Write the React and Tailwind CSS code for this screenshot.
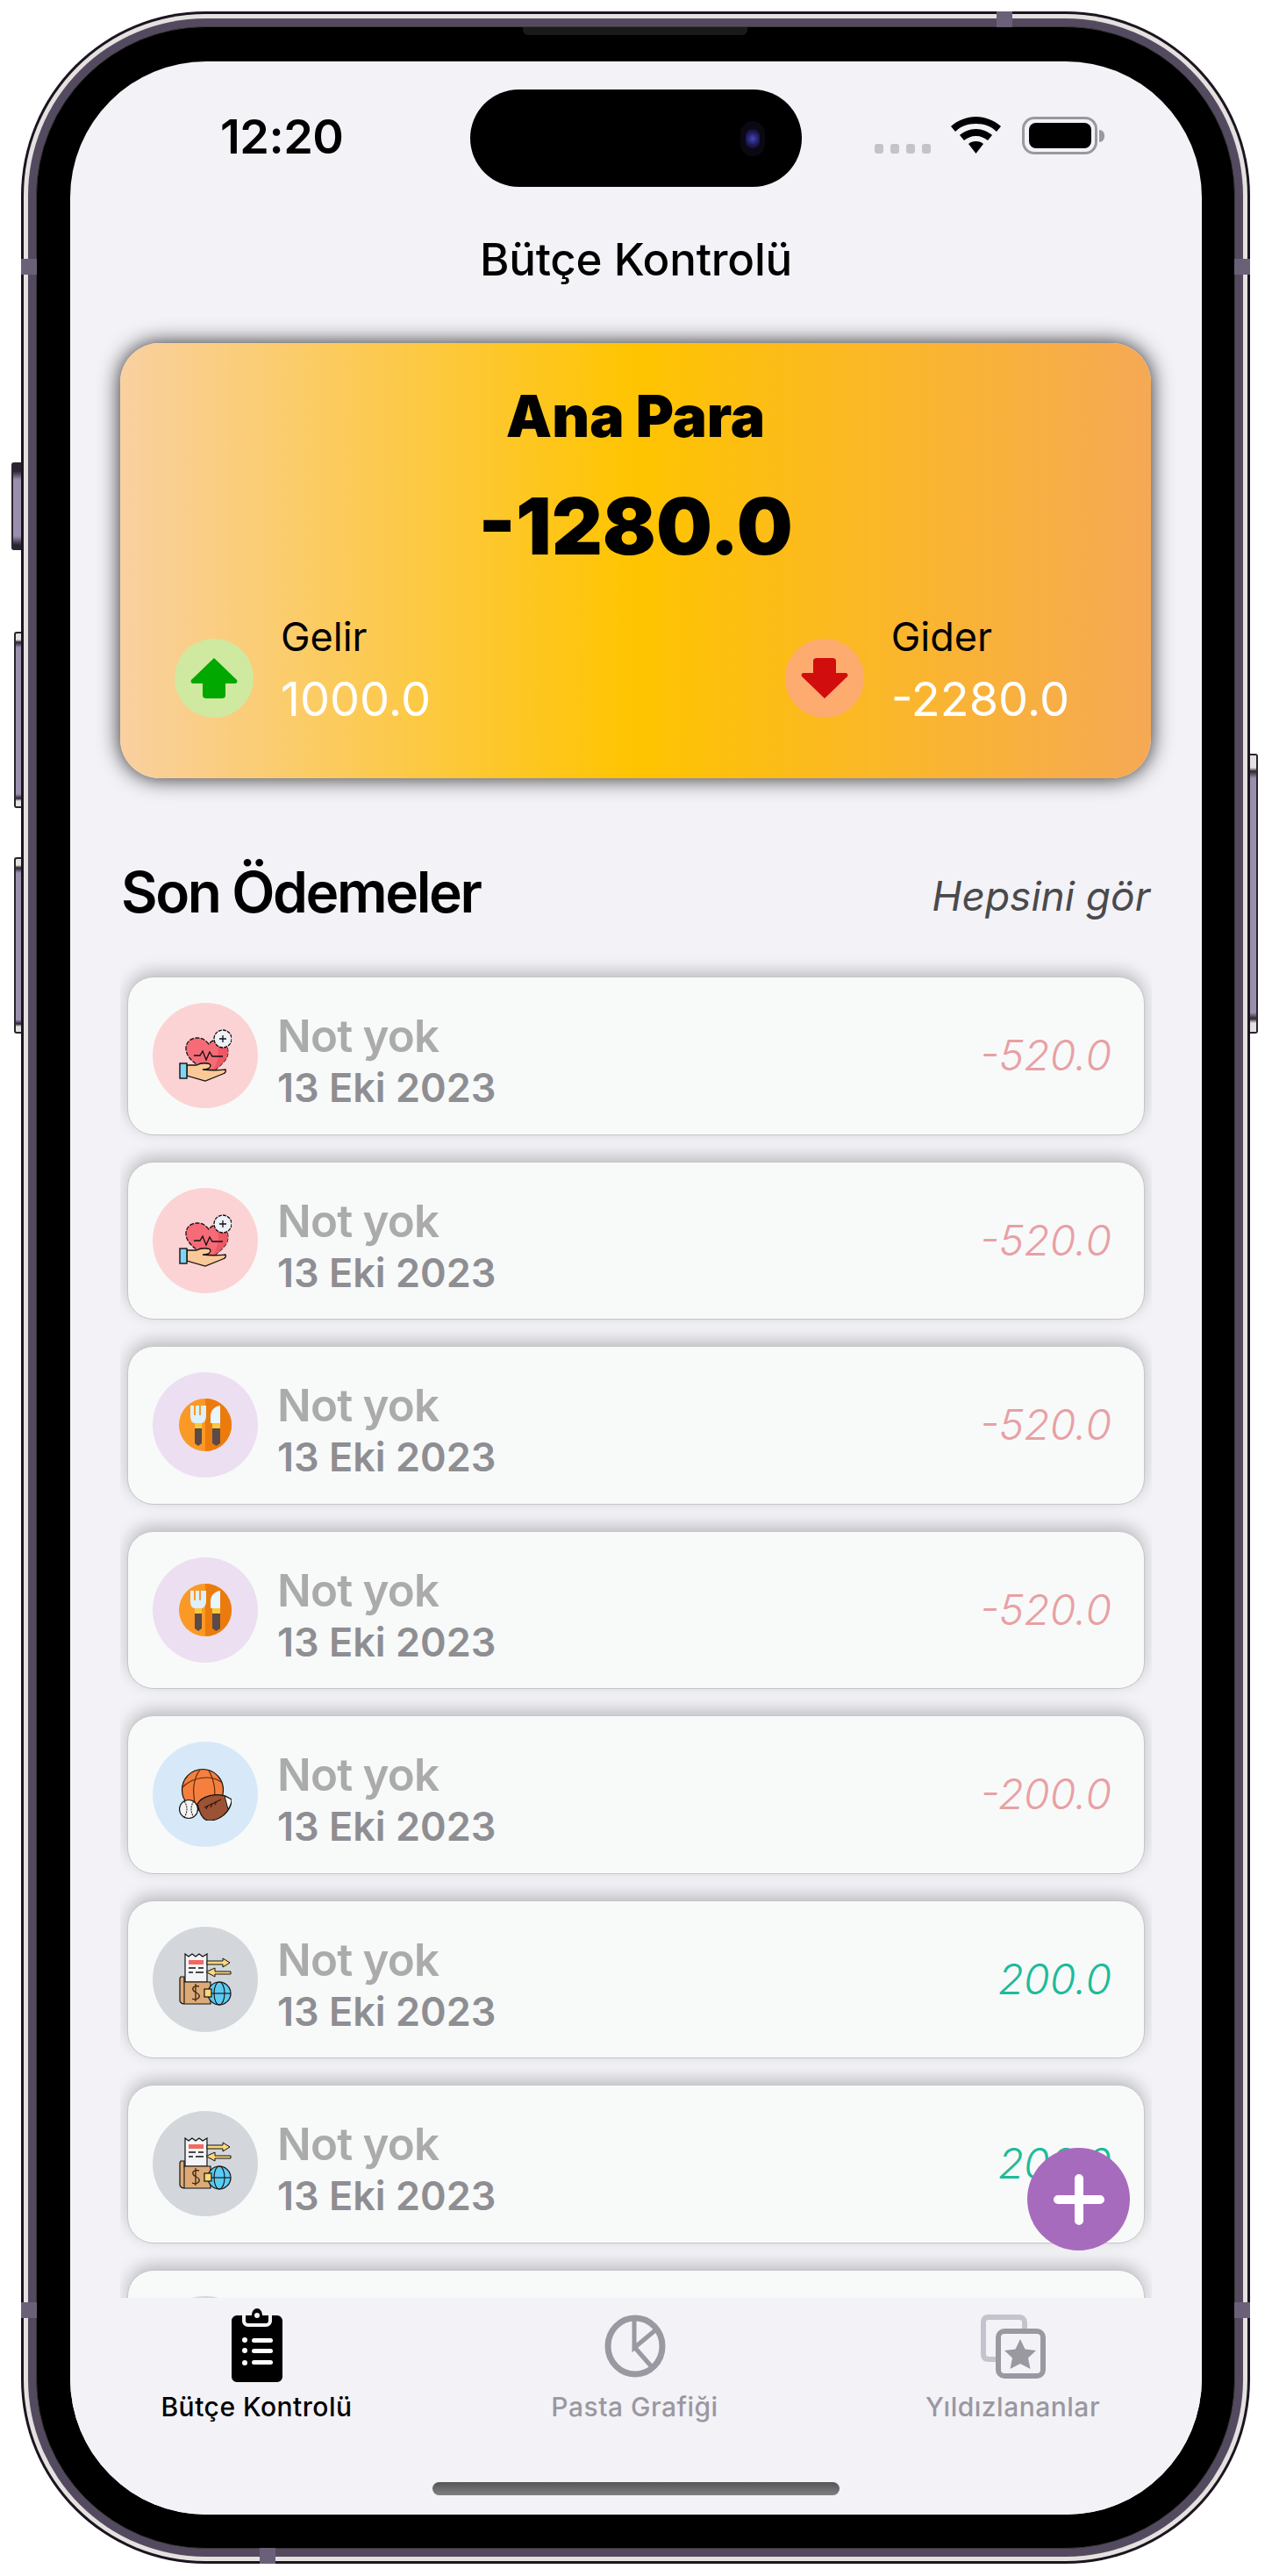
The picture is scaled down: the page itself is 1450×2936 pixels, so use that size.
import React from 'react';

const font = { fontFamily: 'Inter, "Noto Sans", sans-serif' };

const HeartIcon = () => (
    <svg width="60" height="60" viewBox="0 0 60 60">
        <path d="M36 50C22 42 8 34 8 22C8 14 14 10 21 10C27 10 31 13 34 17C38 12 44 11 49 12C57 18 58 30 52 36C47 42 42 46 36 50Z" fill="#F56B77" stroke="#111" strokeWidth="1.3" strokeDasharray="5 1.5" />
        <path d="M40 12C46 20 48 36 36 50C42 46 47 42 52 36C58 30 57 18 49 12Z" fill="#EE5763" />
        <path d="M17 30H24L27 25L31 35L35 26L38 31H50" fill="none" stroke="#111" strokeWidth="1.3" />
        <circle cx="50" cy="11" r="10" fill="#EEF1F7" stroke="#111" strokeWidth="1.3" strokeDasharray="4 1.2" />
        <path d="M50 7V15M46 11H54" stroke="#111" strokeWidth="1.3" />
        <path d="M9 41H20C25 38 35 38 36 41C36 45 31 46 27 46C35 47 44 47 53 46C54 48 53 50 50 51L30 59L9 53Z" fill="#FBC897" stroke="#111" strokeWidth="1.3" />
        <rect x="1" y="39" width="8" height="17" fill="#7FD6F4" stroke="#111" strokeWidth="1.4" />
    </svg>
);

const FoodIcon = () => (
    <svg width="60" height="60" viewBox="0 0 60 60">
        <circle cx="30" cy="30" r="30" fill="#FA9925" />
        <path d="M30 0A30 30 0 0 1 30 60Z" fill="#EC7B0D" />
        <path d="M13 8H17V19H19V8H23V19H25V8H31V20C31 25 28 28 26 28H18C15 28 13 25 13 20Z" fill="#DDF0FF" />
        <rect x="18" y="28" width="8" height="6" fill="#F8C93E" />
        <path d="M18 34H26V51L22 54L18 51Z" fill="#5A4A48" />
        <path d="M47 8V28H36V20C36 14 40 9 47 8Z" fill="#E8F6FF" />
        <rect x="38" y="28" width="9" height="6" fill="#F8C93E" />
        <path d="M38 34H47V51L42.500 54L38 51Z" fill="#5A4A48" />
    </svg>
);

const BallsIcon = () => (
    <svg width="60" height="60" viewBox="0 0 60 60">
        <circle cx="27" cy="25" r="23.5" fill="#F5803E" stroke="#111" strokeWidth="1.2" />
        <path d="M4 22C15 11 35 7 48 16M24 2C15 14 15 32 20 46M34 3C40 13 42 25 40 38" fill="none" stroke="#5d2a10" strokeWidth="1.2" />
        <path d="M21 41C27 31 42 29 53 32L60 36C60 46 50 60 34 60C29 60 24 54 21 41Z" fill="#9C5234" stroke="#111" strokeWidth="1.2" />
        <path d="M29 45L48 36M33 43L31 47M38 41L36 45M43 38L41 42" fill="none" stroke="#2f1408" strokeWidth="1.1" />
        <path d="M52 32L60 36C60 40 58 44 56 47Z" fill="#fff" stroke="#111" strokeWidth="1" />
        <circle cx="11" cy="47" r="10.500" fill="#F4F4F4" stroke="#111" strokeWidth="1.2" />
        <path d="M6 38C10 43 10 51 6 56M17 38C13 43 13 51 17 56" fill="none" stroke="#222" strokeWidth="1.1" strokeDasharray="2 1" />
    </svg>
);

const WalletIcon = () => (
    <svg width="60" height="60" viewBox="0 0 60 60">
        <path d="M7 1L11 4L15 1L19 4L23 1L27 4L32 1V33H7Z" fill="#F2F4F8" stroke="#111" strokeWidth="1.2" />
        <rect x="11" y="8" width="17" height="5" fill="#F2695F" />
        <path d="M11 17H19M22 17H28M11 22H16M19 22H28" stroke="#111" strokeWidth="1.3" />
        <path d="M32 9H50V6L58 11L50 16V13H32Z" fill="#F9D77A" stroke="#111" strokeWidth="1" />
        <path d="M59 21H41V17L31 21.500L41 27V24H59Z" fill="#F9D77A" stroke="#111" strokeWidth="1" />
        <path d="M2 27H6V33H36V58H6C3 58 1 56 1 54V29Z" fill="#DDAA76" stroke="#111" strokeWidth="1.2" />
        <path d="M6 33V58" stroke="#111" strokeWidth="1.1" />
        <circle cx="46" cy="46" r="13" fill="#5CCBF2" stroke="#111" strokeWidth="1.2" />
        <ellipse cx="46" cy="46" rx="6" ry="13" fill="none" stroke="#111" strokeWidth="1.1" />
        <path d="M33 46H59" stroke="#111" strokeWidth="1.1" />
        <rect x="29" y="41" width="8" height="9" fill="#F9D77A" stroke="#111" strokeWidth="1.2" />
        <path d="M23 38C18 37 15 39 16 42C17 45 22 45 23 48C24 52 19 54 15 52M19 35V55" fill="none" stroke="#3a2412" strokeWidth="1.3" />
    </svg>
);

const rows = [
    { id: 1, bg: 'bg-[#FCD3D4]', Icon: HeartIcon, amount: '-520.0' },
    { id: 2, bg: 'bg-[#FCD3D4]', Icon: HeartIcon, amount: '-520.0' },
    { id: 3, bg: 'bg-[#ECDFF1]', Icon: FoodIcon, amount: '-520.0' },
    { id: 4, bg: 'bg-[#ECDFF1]', Icon: FoodIcon, amount: '-520.0' },
    { id: 5, bg: 'bg-[#D7E9F8]', Icon: BallsIcon, amount: '-200.0' },
    { id: 6, bg: 'bg-[#D3D6DB]', Icon: WalletIcon, amount: '200.0', income: true },
    { id: 7, bg: 'bg-[#D3D6DB]', Icon: WalletIcon, amount: '200.0', income: true },
];

const StatusBar = () => (
    <div className="flex h-[143px] shrink-0 pt-[32px]">
        <div className="w-[456px] pl-[171px] pt-[27px] text-[54px] leading-[54px] font-semibold text-black tracking-[-0.5px]">12:20</div>
        <div className="relative flex h-[111px] w-[378px] items-center justify-end rounded-[56px] bg-black pr-[42px]">
            <div className="flex h-[40px] w-[28px] items-center justify-center rounded-full bg-[#0b0812]">
                <div className="h-[22px] w-[16px] rounded-full bg-[radial-gradient(circle,#4a45b8_0%,#1c1a56_55%,#0c0b20_100%)]" />
            </div>
        </div>
        <div className="flex flex-1 items-start pl-[83px] pt-[31px]">
            <div className="mt-[31px] flex gap-[8px]">
                <div className="h-[11px] w-[10px] rounded-[3px] bg-[#C4C3C9]" />
                <div className="h-[11px] w-[10px] rounded-[3px] bg-[#C4C3C9]" />
                <div className="h-[11px] w-[10px] rounded-[3px] bg-[#C4C3C9]" />
                <div className="h-[11px] w-[10px] rounded-[3px] bg-[#C4C3C9]" />
            </div>
            <svg className="ml-[23px]" width="57" height="42" viewBox="0 0 57 42">
                <path d="M28.500 0C18 0 8 4 0 11L5 17C11 11 19 8 28.500 8C38 8 46 11 52 17L57 11C49 4 39 0 28.500 0Z" fill="#000" />
                <path d="M28.500 14C21 14 15 17 10 21L15 27C19 24 23 22 28.500 22C34 22 38 24 42 27L47 21C42 17 36 14 28.500 14Z" fill="#000" />
                <path d="M28.500 28C25 28 22 29 20 31L28.500 42L37 31C35 29 32 28 28.500 28Z" fill="#000" />
            </svg>
            <div className="ml-[24px] flex h-[43px] w-[86px] items-center justify-center rounded-[14px] border-[3.500px] border-[#99999E]">
                <div className="h-[29px] w-[71px] rounded-[8px] bg-black" />
            </div>
            <div className="ml-[2px] mt-[15px] h-[14px] w-[6px] rounded-r-full bg-[#99999E]" />
        </div>
    </div>
);

const Summary = ({ label, value, right }) => (
    <div className="flex">
        <div className={`mt-[22px] flex h-[90px] w-[90px] items-center justify-center rounded-full ${right ? 'bg-[#FDAB6F]' : 'bg-[#CFE9A0]'}`}>
            {right ? (
                <svg width="54" height="46" viewBox="0 0 54 46">
                    <path d="M27 46L53 21C54 19 53 17 51 17H40V3C40 1 38 0 36 0H18C16 0 14 1 14 3V17H3C1 17 0 19 1 21Z" fill="#D10D0D" />
                </svg>
            ) : (
                <svg width="54" height="46" viewBox="0 0 54 46">
                    <path d="M27 0L53 25C54 27 53 29 51 29H40V43C40 45 38 46 36 46H18C16 46 14 45 14 43V29H3C1 29 0 27 1 25Z" fill="#00A800" />
                </svg>
            )}
        </div>
        <div className="ml-[31px]">
            <div className="text-[45px] leading-[50px] text-black -mt-[5px]">{label}</div>
            <div className="mt-[16px] text-[54px] leading-[60px] text-white">{value}</div>
        </div>
    </div>
);

const Row = ({ bg, Icon, amount, income }) => (
    <div className="flex h-[180.500px] shrink-0 items-center rounded-[30px] border border-[#C4C6C6] bg-[#F8FAF9] pl-[28px] pr-[37px] shadow-[0_-6px_18px_rgba(0,0,0,0.22)]">
        <div className={`flex h-[120px] w-[120px] shrink-0 items-center justify-center rounded-full ${bg}`}>
            <Icon />
        </div>
        <div className="ml-[22px] flex-1 pt-[10px]">
            <div className="text-[51px] leading-[64px] font-semibold tracking-[-0.8px] text-[#ABABAB]">Not yok</div>
            <div className="text-[45px] leading-[54px] font-semibold text-[#8E8E93]">13 Eki 2023</div>
        </div>
        <div className={`text-[48px] font-light italic ${income ? 'text-[#1DBB9A]' : 'text-[#E8A0A5]'}`}>{amount}</div>
    </div>
);

const Tab = ({ label, active, children }) => (
    <div className="flex flex-col items-center">
        <div className="flex h-[96px] items-end">{children}</div>
        <div className={`mt-[8px] text-[30px] leading-[40px] font-medium tracking-[0.5px] ${active ? 'text-black' : 'text-[#9A98A0]'}`}>{label}</div>
    </div>
);

const App = () => {
    return (
        <div className="relative h-[2936px] w-[1450px] bg-white pl-[24px] pt-[13px]" style={font}>
            {/* side buttons */}
            <div className="absolute left-[13px] top-[527px] h-[100px] w-[11px] rounded-l-[3px] border-2 border-r-0 border-[#2b2430] bg-[linear-gradient(180deg,#2b2430_0,#2b2430_8px,#9a90ae_18px,#9a90ae_82px,#2b2430_92px,#2b2430_100%)]" />
            <div className="absolute left-[16px] top-[720px] h-[201px] w-[8px] rounded-l-[3px] border-2 border-r-0 border-[#2b2430] bg-[linear-gradient(180deg,#E4E1DF_0,#E4E1DF_7px,#2b2430_10px,#9a90ae_16px,#9a90ae_183px,#2b2430_188px,#E4E1DF_191px,#E4E1DF_100%)]" />
            <div className="absolute left-[16px] top-[977px] h-[201px] w-[8px] rounded-l-[3px] border-2 border-r-0 border-[#2b2430] bg-[linear-gradient(180deg,#E4E1DF_0,#E4E1DF_7px,#2b2430_10px,#9a90ae_16px,#9a90ae_183px,#2b2430_188px,#E4E1DF_191px,#E4E1DF_100%)]" />
            <div className="absolute left-[1425px] top-[859px] h-[319px] w-[9px] rounded-r-[3px] border-2 border-l-0 border-[#2b2430] bg-[linear-gradient(180deg,#E4E1DF_0,#E4E1DF_14px,#2b2430_18px,#9a90ae_26px,#9a90ae_293px,#2b2430_300px,#E4E1DF_305px,#E4E1DF_100%)]" />

            <div className="h-[2909px] w-[1401px] rounded-[210px] bg-[#1c1420] p-[3px]">
                <div className="h-full w-full rounded-[207px] bg-[#E4E1DF] p-[5px]">
                    <div className="h-full w-full rounded-[202px] bg-[#544A60] p-[9px]">
                        <div className="h-full w-full rounded-[193px] border border-[#3a3a3a] bg-black pb-[38px] pl-[38px] pr-[37px] pt-[39px]">
                            <div className="flex h-[2796px] w-[1290px] flex-col overflow-hidden rounded-[155px] bg-[#F3F2F7]">
                                <StatusBar />

                                <div className="relative flex min-h-0 flex-1 flex-col">
                                    <div className="mt-[53px] text-center text-[51px] leading-[60px] font-medium tracking-[-0.2px] text-black">Bütçe Kontrolü</div>

                                    <div className="ml-[57px] mr-[58px] mt-[65px] h-[496px] shrink-0 rounded-[45px] bg-[linear-gradient(90deg,#F9D0A0_0%,#FFC400_50%,#F6A955_100%)] pt-[48px] shadow-[0_0_24px_rgba(0,0,0,0.85)]">
                                        <div className="text-center text-[66px] leading-[70px] font-black text-black">Ana Para</div>
                                        <div className="mt-[37px] text-center text-[90px] leading-[108px] font-black text-black">-1280.0</div>
                                        <div className="mt-[52px] flex justify-between pl-[62px] pr-[93px]">
                                            <Summary label="Gelir" value="1000.0" />
                                            <Summary label="Gider" value="-2280.0" right />
                                        </div>
                                    </div>

                                    <div className="ml-[58px] mr-[59px] mt-[92px] flex items-end justify-between">
                                        <div className="text-[64px] leading-[76px] font-semibold tracking-[-2.4px] text-black">Son Ödemeler</div>
                                        <div className="pb-[4px] text-[46px] leading-[60px] italic text-[#4A4A4C]">Hepsini gör</div>
                                    </div>

                                    <div className="mx-[57px] mt-[28px] flex min-h-0 flex-1 flex-col gap-[30px] overflow-hidden px-[8px] pt-[30px]">
                                        {rows.map((r) => (
                                            <Row key={r.id} bg={r.bg} Icon={r.Icon} amount={r.amount} income={r.income} />
                                        ))}
                                        {/* next row just peeking out above the tab bar */}
                                        <div className="h-[180.500px] shrink-0 rounded-[30px] border border-[#C4C6C6] bg-[#F8FAF9] pl-[28px] pt-[29px] shadow-[0_-6px_18px_rgba(0,0,0,0.22)]">
                                            <div className="h-[120px] w-[120px] rounded-full bg-[#D3D6DB]" />
                                        </div>
                                    </div>

                                    {/* floating add button */}
                                    <div className="absolute bottom-[301px] right-[82px] flex h-[117px] w-[117px] items-center justify-center rounded-full bg-[#A76BBD]">
                                        <svg width="58" height="58" viewBox="0 0 58 58">
                                            <path d="M29 5V53M5 29H53" stroke="#fff" strokeWidth="10" strokeLinecap="round" />
                                        </svg>
                                    </div>

                                    <div className="-ml-[3px] grid h-[247px] shrink-0 grid-cols-3 bg-[#F3F2F7]">
                                        <Tab label="Bütçe Kontrolü" active>
                                            <svg width="58" height="84" viewBox="0 0 58 84">
                                                <path d="M6 8H12V14C12 18 15 21 19 21H39C43 21 46 18 46 14V8H52C55 8 58 11 58 14V78C58 81 55 84 52 84H6C3 84 0 81 0 78V14C0 11 3 8 6 8Z" fill="#000" />
                                                <path d="M16 8H23C23 3 26 0 29 0C32 0 35 3 35 8H42V14C42 16 41 17 39 17H19C17 17 16 16 16 14ZM29 5A3 3 0 1 0 29 11A3 3 0 1 0 29 5Z" fill="#000" fillRule="evenodd" />
                                                <g fill="#fff">
                                                    <circle cx="15" cy="36" r="3" />
                                                    <circle cx="15" cy="48" r="3" />
                                                    <circle cx="15" cy="62" r="3" />
                                                    <rect x="23" y="34" width="24" height="5" rx="2.500" />
                                                    <rect x="23" y="46" width="24" height="5" rx="2.500" />
                                                    <rect x="23" y="59" width="24" height="5" rx="2.500" />
                                                </g>
                                            </svg>
                                        </Tab>
                                        <Tab label="Pasta Grafiği">
                                            <svg className="mb-[5px]" width="70" height="72" viewBox="0 0 70 72">
                                                <ellipse cx="35" cy="36" rx="31" ry="32" fill="none" stroke="#9A98A0" strokeWidth="7" />
                                                <path d="M34 4V38L59 17M35 38L56 62" fill="none" stroke="#9A98A0" strokeWidth="5" />
                                            </svg>
                                        </Tab>
                                        <Tab label="Yıldızlananlar">
                                            <svg className="mb-[4px]" width="74" height="73" viewBox="0 0 74 73">
                                                <path d="M50 16V9C50 5 47 3 44 3H9C5 3 3 5 3 9V45C3 49 5 51 9 51H17" fill="none" stroke="#C5C3CB" strokeWidth="6" />
                                                <rect x="20" y="19" width="51" height="51" rx="7" fill="none" stroke="#9A98A0" strokeWidth="6" />
                                                <path d="M45 28L50.500 39.500L63 41L54 49.500L56.500 62L45 56L33.500 62L36 49.500L27 41L39.500 39.500Z" fill="#9A98A0" />
                                            </svg>
                                        </Tab>
                                    </div>

                                    <div className="absolute bottom-[22px] left-[413px] h-[15px] w-[464px] rounded-full bg-[linear-gradient(180deg,#555558,#808082)]" />
                                </div>
                            </div>
                        </div>
                    </div>
                </div>
            </div>

            {/* frame details: speaker slot and antenna bands */}
            <div className="absolute left-[596px] top-[31px] h-[9px] w-[256px] rounded-b-[6px] bg-[#1a1a1c]" />
            <div className="absolute left-[1136px] top-[13px] h-[18px] w-[18px] bg-[#6a6078]" />
            <div className="absolute left-[24px] top-[295px] h-[18px] w-[18px] bg-[#6a6078]" />
            <div className="absolute left-[1407px] top-[295px] h-[18px] w-[18px] bg-[#6a6078]" />
            <div className="absolute left-[24px] top-[2624px] h-[18px] w-[18px] bg-[#6a6078]" />
            <div className="absolute left-[1407px] top-[2624px] h-[18px] w-[18px] bg-[#6a6078]" />
            <div className="absolute left-[296px] top-[2904px] h-[18px] w-[18px] bg-[#6a6078]" />
        </div>
    );
}

export default App;
